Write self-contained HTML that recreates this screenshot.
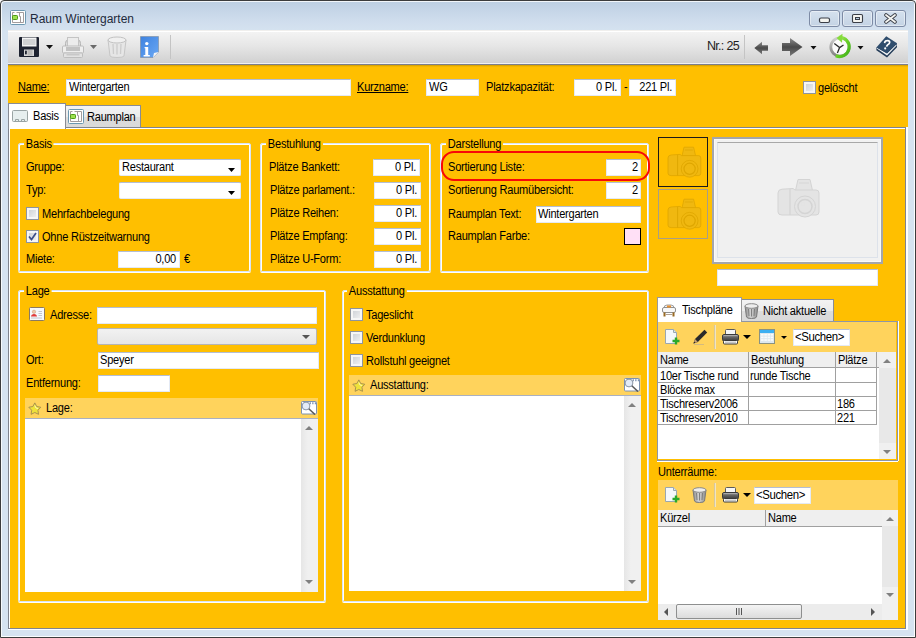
<!DOCTYPE html>
<html><head><meta charset="utf-8">
<style>
*{box-sizing:border-box}
html,body{margin:0;padding:0}
body{width:916px;height:638px;overflow:hidden;position:relative;font-family:"Liberation Sans",sans-serif;font-size:11px;color:#000;background:#ffffff}
.a{position:absolute}
.t{position:absolute;font-size:12px;line-height:13px;letter-spacing:-0.25px;white-space:nowrap;transform:scaleX(0.92);transform-origin:0 0}
.t[style*="text-align:right"]{transform-origin:100% 0}
.in{position:absolute;background:#fff;border:1px solid #e4eaf5;border-top-color:#b3bed5;border-radius:1px}
.cb{position:absolute;width:13px;height:13px;border:1px solid #8e949e;background:linear-gradient(135deg,#c8ccd2,#f6f6f6);box-shadow:inset 0 0 0 2px #f6f6f6}
.gb{position:absolute;border:1px solid #d9e4f4;border-radius:2px;box-shadow:inset 1px 1px 0 #fff,inset -1px 0 0 #fff,0 1px 0 #fff}
.gbt{position:absolute;background:#ffbf00;padding:0 2px;font-size:12px;line-height:13px;letter-spacing:-0.25px;white-space:nowrap;transform:scaleX(0.92);transform-origin:0 0}
.band{position:absolute;background:#ffd35c}
.ta{position:absolute;background:#fff}
.vs{position:absolute;background:linear-gradient(90deg,#e6e6e6,#f0f0f0 40%,#f0f0f0);width:17px}
.ut{text-decoration:underline}
.wb{width:31px;height:17px;border:1px solid #7d8ba5;border-radius:3px;background:linear-gradient(#d5e1ee,#c4d3e4);box-shadow:inset 0 0 0 1px rgba(255,255,255,0.45)}
</style></head><body>
<!-- window frame -->
<div class="a" style="left:0;top:0;width:916px;height:638px;border:1px solid #3c3c3c;border-radius:4px 4px 0 0;background:linear-gradient(#bdcfe2 0px,#cfdded 20px,#d6e3f0 31px,#d6e3f0 100%);box-shadow:inset 1px 1px 0 rgba(255,255,255,0.8),inset -1px -1px 0 rgba(255,255,255,0.9)"></div>
<!-- title -->
<svg class="a" style="left:10px;top:10px" width="16" height="15" viewBox="0 0 16 15">
<rect x="0.5" y="0.5" width="15" height="14" rx="1" fill="#fff" stroke="#6d98b0"/>
<path d="M2.5 12.5V2.5H4.5M6.5 2.5H13.5V12.5H2.5M9.5 2.5V6.5H10.5V12.5" fill="none" stroke="#a39c9c"/>
<rect x="2.5" y="5.5" width="5" height="4" rx="0.8" fill="#9ee050" stroke="#4c9c12"/>
</svg>
<div class="t" style="left:30px;top:12px;font-size:12px;line-height:14px;color:#1e2a3c;transform:none;letter-spacing:0">Raum Wintergarten</div>
<!-- title buttons -->
<div class="a wb" style="left:809px;top:10px"></div>
<div class="a wb" style="left:842px;top:10px"></div>
<div class="a wb" style="left:875px;top:10px"></div>
<svg class="a" style="left:818px;top:17px" width="13" height="7" viewBox="0 0 13 7"><rect x="1.5" y="1" width="10" height="4.5" rx="1.5" fill="#f4f4f0" stroke="#3b3f48" stroke-width="1.2"/></svg>
<svg class="a" style="left:851px;top:13px" width="13" height="11" viewBox="0 0 13 11"><rect x="1.5" y="1.5" width="10" height="8" rx="1.2" fill="#f4f4f0" stroke="#3b3f48" stroke-width="1.1"/><rect x="4.5" y="4.5" width="4" height="2" fill="#b8cce0" stroke="#3b3f48" stroke-width="1"/></svg>
<svg class="a" style="left:884px;top:13px" width="13" height="11" viewBox="0 0 13 11"><path d="M2 2L11 9M11 2L2 9" stroke="#3b3f48" stroke-width="3.6" stroke-linecap="round"/><path d="M2 2L11 9M11 2L2 9" stroke="#f4f4f0" stroke-width="1.8" stroke-linecap="round"/></svg>
<!-- toolbar -->
<div class="a" style="left:8px;top:30px;width:900px;height:34px;background:linear-gradient(#f0efed 0px,#f0efed 1px,#ffffff 1px,#ffffff 2px,#f3f3f3 2px,#e6e6e6 16px,#d2d2d2 32px,#cfcfcf 33px,#f0f0f0 33px)"></div>
<div class="a" style="left:170px;top:35px;width:1px;height:24px;background:#c4c4c4"></div>
<div class="a" style="left:744px;top:35px;width:1px;height:24px;background:#c4c4c4"></div>
<div class="t" style="left:707px;top:39px;font-size:12.5px;line-height:14px;color:#1e1e1e;letter-spacing:-0.7px;transform:none">Nr.: 25</div>
<!-- save -->
<svg class="a" style="left:19px;top:37px" width="20" height="20" viewBox="0 0 20 20">
<rect x="0" y="0" width="20" height="20" rx="1" fill="#1d2230"/>
<rect x="3" y="0.5" width="14.5" height="9" fill="#f4f4f4"/>
<rect x="4" y="2" width="12.5" height="6" fill="#d0d2d4"/>
<rect x="5" y="12.5" width="10" height="6.5" fill="#d6d6d6"/>
<rect x="8.5" y="13" width="5" height="5.5" fill="#b8b8b8"/>
<rect x="6" y="13.5" width="1.8" height="4" rx="0.8" fill="#1d2230"/>
</svg>
<svg class="a" style="left:46px;top:45px" width="7" height="4" viewBox="0 0 7 4"><path d="M0 0H7L3.5 4Z" fill="#111"/></svg>
<!-- printer disabled -->
<svg class="a" style="left:62px;top:37px" width="22" height="21" viewBox="0 0 22 21">
<path d="M3.5 12V6.5Q3.5 3 6 3H16Q18.5 3 18.5 6.5V12" fill="#dcdcdc" stroke="#b4b4b4"/>
<rect x="5.5" y="0.5" width="11" height="9" fill="#ececec" stroke="#c4c4c4"/>
<rect x="0.5" y="9" width="21" height="7" rx="1" fill="#eeeeee" stroke="#bdbdbd"/>
<rect x="4" y="10" width="14" height="4" fill="#c2c2c2"/>
<rect x="1.5" y="16" width="19" height="4.5" rx="1" fill="#e2e2e2" stroke="#bdbdbd"/>
<rect x="4.5" y="17" width="13" height="1.5" fill="#c8c8c8"/>
</svg>
<svg class="a" style="left:90px;top:45px" width="7" height="4" viewBox="0 0 7 4"><path d="M0 0H7L3.5 4Z" fill="#6a6a6a"/></svg>
<!-- trash disabled -->
<svg class="a" style="left:107px;top:36px" width="20" height="22" viewBox="0 0 20 22">
<path d="M1 4L3 20Q3.5 21.5 10 21.5Q16.5 21.5 17 20L19 4Z" fill="#e6e6e6" stroke="#c6c6c6"/>
<ellipse cx="10" cy="4" rx="9" ry="3" fill="#f0f0f0" stroke="#c2c2c2"/>
<path d="M6 8L6.5 18M10 8V18.5M14 8L13.5 18" stroke="#cccccc" stroke-width="1.3"/>
</svg>
<!-- info -->
<svg class="a" style="left:140px;top:36px" width="19" height="22" viewBox="0 0 19 22">
<defs><linearGradient id="ig" x1="0" y1="0" x2="1" y2="1"><stop offset="0" stop-color="#3e82df"/><stop offset="1" stop-color="#6aa8f4"/></linearGradient></defs>
<path d="M0.5 0.5H18.5V16L13 21.5H0.5Z" fill="url(#ig)" stroke="#7d8c9c" stroke-width="0.6"/>
<path d="M18.5 16L13 21.5L14 17Z" fill="#f4f4f4"/>
<circle cx="6.8" cy="7.6" r="1.7" fill="#fff"/>
<path d="M4.6 11H8.2V19H9.8V20.4H3.6V19H5.3V12.3H4.6Z" fill="#fff"/>
</svg>
<!-- left arrow -->
<svg class="a" style="left:754px;top:41px" width="15" height="14" viewBox="0 0 15 14">
<defs><linearGradient id="ag" x1="0" y1="0" x2="0" y2="1"><stop offset="0" stop-color="#8a8a8a"/><stop offset="0.5" stop-color="#4a4a4a"/><stop offset="1" stop-color="#777"/></linearGradient></defs>
<path d="M0.3 7L8 0.8V4.2H14V9.8H8V13.2Z" fill="url(#ag)"/>
</svg>
<!-- right arrow -->
<svg class="a" style="left:781px;top:37px" width="22" height="20" viewBox="0 0 22 20">
<path d="M1 6H9V1L21.5 10L9 19V14H1Z" fill="url(#ag)"/>
</svg>
<svg class="a" style="left:810px;top:46px" width="7" height="4" viewBox="0 0 7 4"><path d="M0.5 0H6.5L3.5 3.5Z" fill="#111"/></svg>
<!-- clock -->
<svg class="a" style="left:826px;top:32px" width="30" height="28" viewBox="0 0 30 28">
<defs><linearGradient id="cg" x1="0" y1="0" x2="1" y2="1"><stop offset="0" stop-color="#b8f070"/><stop offset="0.5" stop-color="#6cd228"/><stop offset="1" stop-color="#3cae18"/></linearGradient>
<linearGradient id="rg" x1="0" y1="0" x2="0" y2="1"><stop offset="0" stop-color="#d0d0d0"/><stop offset="1" stop-color="#808080"/></linearGradient></defs>
<circle cx="14" cy="15" r="9.2" fill="#fbfbfb" stroke="url(#rg)" stroke-width="2.8"/>
<path d="M13 5.3A9.6 9.6 0 1 1 9.8 23.7" fill="none" stroke="url(#cg)" stroke-width="3.2"/>
<path d="M10.5 6L16.5 1.8L16 10.8Z" fill="#86dc3c"/>
<path d="M13.6 15.6L8.3 11.4M13.6 15.6L17.5 13M13.6 15.6L11.4 21" stroke="#2a2a2a" stroke-width="1.3"/>
</svg>
<svg class="a" style="left:857px;top:46px" width="7" height="4" viewBox="0 0 7 4"><path d="M0.5 0H6.5L3.5 3.5Z" fill="#111"/></svg>
<!-- help book -->
<svg class="a" style="left:872px;top:32px" width="30" height="28" viewBox="0 0 30 28">
<path d="M4.4 15.4V18.2L15 25.6L25 15.2V11.2Z" fill="#243c58"/>
<path d="M4.8 16.6L15 23.4L24.6 13.4V12.2L15 21.6L4.8 15.4Z" fill="#f2f4f6"/>
<path d="M14.2 4.2L25 11.2L15 21.2L4.4 15.4Z" fill="#2f4d6d"/>
<path d="M12.6 11.2Q13 8.2 16 8.6Q18.6 9.2 17.2 11.6Q15.2 13 14.4 14.6" fill="none" stroke="#fff" stroke-width="1.7"/>
<circle cx="13.2" cy="16.4" r="1.05" fill="#fff"/>
</svg>

<!-- orange main -->
<div class="a" style="left:8px;top:64px;width:900px;height:64px;background:linear-gradient(#7c7f8a 0px,#7c7f8a 1px,#d09a00 1px,#e6ae00 2px,#ffbf00 3px)"></div>
<!-- header row -->
<div class="t ut" style="left:18px;top:81px">Name:</div>
<div class="in" style="left:66px;top:79px;width:285px;height:17px"></div>
<div class="t" style="left:69px;top:81px">Wintergarten</div>
<div class="t ut" style="left:357px;top:81px">Kurzname:</div>
<div class="in" style="left:426px;top:79px;width:53px;height:17px"></div>
<div class="t" style="left:429px;top:81px">WG</div>
<div class="t" style="left:486px;top:81px">Platzkapazität:</div>
<div class="in" style="left:574px;top:79px;width:47px;height:17px"></div>
<div class="t" style="left:574px;top:81px;width:43px;text-align:right">0 Pl.</div>
<div class="t" style="left:624px;top:81px">-</div>
<div class="in" style="left:629px;top:79px;width:47px;height:17px"></div>
<div class="t" style="left:629px;top:81px;width:43px;text-align:right">221 Pl.</div>
<div class="cb" style="left:803px;top:81px"></div>
<div class="t" style="left:818px;top:82px">gelöscht</div>
<!-- tab panel -->
<div class="a" style="left:8px;top:127px;width:900px;height:503px;background:#fff"></div>
<div class="a" style="left:8px;top:127px;width:898px;height:502px;border:1px solid #80848f;background:#ffbf00;box-shadow:inset 1px 1px 0 #fff"></div>
<!-- tabs -->
<div class="a" style="left:65px;top:105px;width:76px;height:22px;border:1px solid #898c95;border-bottom:none;background:linear-gradient(#f3f3f3 0%,#ebebeb 50%,#dddddd 50%,#d9d9d9 100%)"></div>
<svg class="a" style="left:68px;top:109px" width="16" height="15" viewBox="0 0 16 15">
<rect x="0.5" y="0.5" width="15" height="14" rx="1" fill="#fff" stroke="#6d98b0"/>
<path d="M2.5 12.5V2.5H4.5M6.5 2.5H13.5V12.5H2.5M9.5 2.5V6.5H10.5V12.5" fill="none" stroke="#a39c9c"/>
<rect x="2.5" y="5.5" width="5" height="4" rx="0.8" fill="#9ee050" stroke="#4c9c12"/>
</svg>
<div class="t" style="left:87px;top:111px">Raumplan</div>
<div class="a" style="left:8px;top:103px;width:58px;height:26px;border:1px solid #898c95;border-bottom:none;background:#fff"></div>
<svg class="a" style="left:12px;top:110px" width="16" height="12" viewBox="0 0 16 12">
<rect x="0.5" y="0.5" width="15" height="11" rx="1" fill="#e6eeee" stroke="#9aa4a4"/>
<path d="M3.5 11.5V9.5H6.5V11.5M9.5 11.5V9.5H12.5V11.5" fill="none" stroke="#9aa4a4"/>
</svg>
<div class="t" style="left:33px;top:110px">Basis</div>

<!-- Basis group -->
<div class="gb" style="left:18px;top:143px;width:233px;height:129px"></div>
<div class="gbt" style="left:24px;top:138px">Basis</div>
<div class="t" style="left:26px;top:161px">Gruppe:</div>
<div class="in" style="left:119px;top:159px;width:122px;height:17px;border-radius:2px"></div>
<div class="t" style="left:122px;top:161px">Restaurant</div>
<svg class="a dd" style="left:228px;top:168px" width="7" height="4"><path d="M0 0H7L3.5 4Z" fill="#000"/></svg>
<div class="t" style="left:26px;top:184px">Typ:</div>
<div class="in" style="left:119px;top:182px;width:122px;height:17px;border-radius:2px"></div>
<svg class="a dd" style="left:228px;top:191px" width="7" height="4"><path d="M0 0H7L3.5 4Z" fill="#000"/></svg>
<div class="cb" style="left:26px;top:207px"></div>
<div class="t" style="left:42px;top:208px">Mehrfachbelegung</div>
<div class="cb" style="left:26px;top:230px"></div>
<svg class="a" style="left:28px;top:232px" width="9" height="9" viewBox="0 0 9 9"><path d="M1 4.5L3.5 7.5L8 1" fill="none" stroke="#3d4f8a" stroke-width="1.7"/></svg>
<div class="t" style="left:42px;top:231px">Ohne Rüstzeitwarnung</div>
<div class="t" style="left:26px;top:253px">Miete:</div>
<div class="in" style="left:118px;top:251px;width:62px;height:17px"></div>
<div class="t" style="left:118px;top:253px;width:58px;text-align:right">0,00</div>
<div class="t" style="left:184px;top:253px">€</div>

<!-- Bestuhlung group -->
<div class="gb" style="left:260px;top:143px;width:171px;height:129px"></div>
<div class="gbt" style="left:266px;top:138px">Bestuhlung</div>
<div class="t" style="left:269px;top:161px">Plätze Bankett:</div>
<div class="in" style="left:373px;top:159px;width:47px;height:17px"></div>
<div class="t" style="left:373px;top:161px;width:43px;text-align:right">0 Pl.</div>
<div class="t" style="left:270px;top:184px">Plätze parlament.:</div>
<div class="in" style="left:374px;top:182px;width:47px;height:17px"></div>
<div class="t" style="left:374px;top:184px;width:43px;text-align:right">0 Pl.</div>
<div class="t" style="left:270px;top:207px">Plätze Reihen:</div>
<div class="in" style="left:374px;top:205px;width:47px;height:17px"></div>
<div class="t" style="left:374px;top:207px;width:43px;text-align:right">0 Pl.</div>
<div class="t" style="left:270px;top:230px">Plätze Empfang:</div>
<div class="in" style="left:374px;top:228px;width:47px;height:17px"></div>
<div class="t" style="left:374px;top:230px;width:43px;text-align:right">0 Pl.</div>
<div class="t" style="left:270px;top:253px">Plätze U-Form:</div>
<div class="in" style="left:374px;top:251px;width:47px;height:17px"></div>
<div class="t" style="left:374px;top:253px;width:43px;text-align:right">0 Pl.</div>

<!-- Darstellung group -->
<div class="gb" style="left:440px;top:143px;width:209px;height:129px"></div>
<div class="gbt" style="left:446px;top:138px">Darstellung</div>
<div class="t" style="left:448px;top:161px">Sortierung Liste:</div>
<div class="in" style="left:606px;top:159px;width:35px;height:17px"></div>
<div class="t" style="left:606px;top:161px;width:32px;text-align:right">2</div>
<div class="t" style="left:448px;top:184px">Sortierung Raumübersicht:</div>
<div class="in" style="left:606px;top:182px;width:35px;height:17px"></div>
<div class="t" style="left:606px;top:184px;width:32px;text-align:right">2</div>
<div class="t" style="left:448px;top:208px">Raumplan Text:</div>
<div class="in" style="left:536px;top:206px;width:105px;height:17px"></div>
<div class="t" style="left:538px;top:208px">Wintergarten</div>
<div class="t" style="left:448px;top:230px">Raumplan Farbe:</div>
<div class="a" style="left:624px;top:228px;width:17px;height:17px;border:1px solid #000;background:#ffe0f6"></div>
<div class="a" style="left:441px;top:151px;width:209px;height:30px;border:2px solid #f80808;border-radius:13px"></div>

<!-- image boxes -->
<div class="a" style="left:658px;top:137px;width:50px;height:50px;border:1px solid #1a1a1a"></div>
<svg class="a" style="left:666px;top:146px" width="36" height="32" viewBox="0 0 44 40"><use href="#cam" fill="#f0b810" stroke="#dea600"/></svg>
<div class="a" style="left:658px;top:189px;width:50px;height:50px;border:1px solid #a89e86"></div>
<svg class="a" style="left:666px;top:198px" width="36" height="32" viewBox="0 0 44 40"><use href="#cam" fill="#f0b810" stroke="#dea600"/></svg>
<div class="a" style="left:712px;top:137px;width:171px;height:127px;border:2px solid #a4a6ac;background:#f2f2f2;box-shadow:inset 1px 1px 0 #fafafa,inset -1px -1px 0 #fafafa"></div>
<div class="a" style="left:717px;top:142px;width:161px;height:116px;border:1px solid #dde2ea;border-top-color:#a8a8a8;background:#f0f0f0"></div>
<svg class="a" style="left:776px;top:178px" width="44" height="40" viewBox="0 0 44 40"><use href="#cam" fill="#e4e4e4" stroke="#d4d4d4"/></svg>
<div class="in" style="left:717px;top:269px;width:161px;height:17px"></div>

<svg width="0" height="0" style="position:absolute"><defs>
<g id="cam">
<path d="M22 1.5H34L36.5 12.5H19.5Z"/>
<path d="M2 15Q2 11.5 6 11.2L17 10.5L19 12H40Q43 12 43 15V34Q43 37 40 37H6Q2 37 2 34Z"/>
<path d="M14 11V37" fill="none" stroke-width="1.2"/>
<circle cx="29" cy="28.5" r="10.5"/>
<circle cx="29" cy="28.5" r="7" stroke-width="1.5"/>
<circle cx="27" cy="26" r="2" stroke="none" fill-opacity="0.5"/>
<path d="M23 5H33" fill="none" stroke-width="1.5" stroke-opacity="0.6"/>
</g>
<g id="star"><path d="M6.80 0.90L8.74 4.53L12.79 5.25L9.94 8.22L10.50 12.30L6.80 10.50L3.10 12.30L3.66 8.22L0.81 5.25L4.86 4.53Z" fill="#efe23a" stroke="#a08a50" stroke-width="0.9" stroke-linejoin="round"/><path d="M6.8 3.5L8 6L10 6.5" fill="none" stroke="#fffbc0" stroke-width="0.9"/></g>
<g id="srch"><rect x="0.5" y="0.5" width="15" height="12.5" rx="1" fill="#fff" stroke="#7d92b0"/><path d="M6 2.2H15" stroke="#7d92b0" stroke-width="2" stroke-dasharray="1.3 1.3"/><circle cx="5" cy="5" r="3.9" fill="#e4ecf8" stroke="#8a96a6" stroke-width="1"/><path d="M7.8 7.8L14 13.6" stroke="#5a5a5a" stroke-width="1.5"/></g>
<g id="up"><path d="M0 4L4 0L8 4Z"/></g>
<g id="dn"><path d="M0 0H8L4 4Z"/></g>
<g id="newdoc"><path d="M0.5 0.5H8.5L11.5 3.5V14.5H0.5Z" fill="#f4f8fa" stroke="#9aa8b0"/><path d="M8.5 0.5V3.5H11.5" fill="#dde6ea" stroke="#9aa8b0"/><path d="M11 8.5V15.5M7.5 12H14.5" stroke="#2aa82a" stroke-width="2.4"/></g>
<g id="prn"><rect x="3.5" y="0.5" width="10" height="6.5" rx="1" fill="#f6f6f6" stroke="#5a5a5a"/><rect x="0.5" y="5.5" width="16" height="6.5" rx="1.5" fill="url(#prg)" stroke="#3a3a3a"/><rect x="1.5" y="11.5" width="14" height="3.5" rx="1" fill="#fafafa" stroke="#3a3a3a"/><path d="M3 13.2H14" stroke="#b0b0b0"/></g><linearGradient id="prg" x1="0" y1="0" x2="0" y2="1"><stop offset="0" stop-color="#d8d8d8"/><stop offset="0.35" stop-color="#6a6a6a"/><stop offset="1" stop-color="#3a3a3a"/></linearGradient>
<g id="trash"><path d="M1 3L2.5 14Q3 15.5 7.5 15.5Q12 15.5 12.5 14L14 3Z" fill="url(#trg)" stroke="#7a7a7a"/><ellipse cx="7.5" cy="3" rx="6.5" ry="2.3" fill="#eeeeee" stroke="#8a8a8a"/><path d="M4.5 6L5 13M7.5 6V13.5M10.5 6L10 13" stroke="#777" stroke-width="0.9"/></g><linearGradient id="trg" x1="0" y1="0" x2="1" y2="0"><stop offset="0" stop-color="#8c8c8c"/><stop offset="0.45" stop-color="#d4d4d4"/><stop offset="1" stop-color="#8a8a8a"/></linearGradient>
</defs></svg>

<!-- Lage group -->
<div class="gb" style="left:18px;top:290px;width:308px;height:312px"></div>
<div class="gbt" style="left:24px;top:285px">Lage</div>
<svg class="a" style="left:29px;top:307px" width="16" height="14" viewBox="0 0 16 14"><rect x="0.5" y="0.5" width="15" height="13" rx="1" fill="#f6f9fc" stroke="#8a7a62"/><circle cx="5" cy="4.8" r="1.7" fill="#eec8a8" stroke="#c89878" stroke-width="0.5"/><path d="M2 9.6Q2.3 7 5 7Q7.7 7 8 9.6Z" fill="#e03a3a"/><path d="M9.5 4.5H13M9.5 6.5H13M9.5 8.5H13M2 11H13" stroke="#b8b8c0" stroke-width="0.8"/></svg>
<div class="t" style="left:50px;top:309px">Adresse:</div>
<div class="in" style="left:97px;top:307px;width:220px;height:17px"></div>
<div class="a" style="left:97px;top:328px;width:220px;height:17px;border:1px solid #b5b5b5;border-radius:2px;background:linear-gradient(#f2f2f2,#e6e6e6)"></div>
<svg class="a" style="left:302px;top:335px" width="8" height="4"><use href="#dn" fill="#555"/></svg>
<div class="t" style="left:26px;top:354px">Ort:</div>
<div class="in" style="left:98px;top:352px;width:221px;height:17px"></div>
<div class="t" style="left:100px;top:354px">Speyer</div>
<div class="t" style="left:26px;top:377px">Entfernung:</div>
<div class="in" style="left:98px;top:375px;width:72px;height:17px"></div>
<div class="band" style="left:25px;top:398px;width:293px;height:21px;border-bottom:1px solid #a9b0c2"></div>
<svg class="a" style="left:28px;top:402px" width="14" height="13"><use href="#star"/></svg>
<div class="t" style="left:46px;top:402px">Lage:</div>
<svg class="a" style="left:301px;top:401px" width="16" height="14"><use href="#srch"/></svg>
<div class="ta" style="left:25px;top:419px;width:293px;height:173px"></div>
<div class="vs" style="left:301px;top:419px;height:173px"></div>
<svg class="a" style="left:305px;top:426px" width="8" height="4"><use href="#up" fill="#808080"/></svg>
<svg class="a" style="left:305px;top:580px" width="8" height="4"><use href="#dn" fill="#808080"/></svg>

<!-- Ausstattung group -->
<div class="gb" style="left:342px;top:290px;width:307px;height:312px"></div>
<div class="gbt" style="left:347px;top:285px">Ausstattung</div>
<div class="cb" style="left:350px;top:308px"></div>
<div class="t" style="left:366px;top:309px">Tageslicht</div>
<div class="cb" style="left:350px;top:331px"></div>
<div class="t" style="left:366px;top:332px">Verdunklung</div>
<div class="cb" style="left:350px;top:354px"></div>
<div class="t" style="left:366px;top:355px">Rollstuhl geeignet</div>
<div class="band" style="left:349px;top:375px;width:292px;height:21px;border-bottom:1px solid #a9b0c2"></div>
<svg class="a" style="left:352px;top:379px" width="14" height="13"><use href="#star"/></svg>
<div class="t" style="left:370px;top:379px">Ausstattung:</div>
<svg class="a" style="left:624px;top:378px" width="16" height="14"><use href="#srch"/></svg>
<div class="ta" style="left:349px;top:396px;width:292px;height:195px"></div>
<div class="vs" style="left:624px;top:396px;height:195px"></div>
<svg class="a" style="left:628px;top:403px" width="8" height="4"><use href="#up" fill="#808080"/></svg>
<svg class="a" style="left:628px;top:580px" width="8" height="4"><use href="#dn" fill="#808080"/></svg>

<!-- Tischplaene -->
<div class="a" style="left:741px;top:299px;width:93px;height:23px;border:1px solid #898c95;border-bottom:none;background:linear-gradient(#f3f3f3 0%,#ebebeb 50%,#dddddd 50%,#d9d9d9 100%)"></div>
<svg class="a" style="left:744px;top:303px" width="15" height="16"><use href="#trash"/></svg>
<div class="t" style="left:763px;top:305px">Nicht aktuelle</div>
<div class="a" style="left:657px;top:321px;width:241px;height:140px;border:1px solid #8e96a6;background:#ffbf00;box-shadow:0 1px 0 #fff,1px 0 0 #fff"></div>
<div class="ta" style="left:658px;top:352px;width:238px;height:107px"></div>
<div class="a" style="left:657px;top:297px;width:85px;height:25px;border:1px solid #9a9a9a;border-bottom:none;background:#fff"></div>
<svg class="a" style="left:662px;top:304px" width="14" height="13" viewBox="0 0 14 13"><path d="M2 4Q2 1 5 1H9Q12 1 12 4" fill="#f0f0f0" stroke="#a0a0a0"/><rect x="0.5" y="3.5" width="13" height="5" rx="1.5" fill="#f8f8f8" stroke="#909090"/><rect x="5" y="1.5" width="4" height="2" fill="#e89030"/><rect x="1.5" y="8.5" width="2" height="4" fill="#9a6a20"/><rect x="10.5" y="8.5" width="2" height="4" fill="#9a6a20"/><path d="M3.5 10.5H10.5" stroke="#b0a090"/></svg>
<div class="t" style="left:682px;top:304px">Tischpläne</div>
<div class="band" style="left:658px;top:322px;width:238px;height:30px"></div>
<svg class="a" style="left:665px;top:329px" width="15" height="16"><use href="#newdoc"/></svg>
<svg class="a" style="left:692px;top:329px" width="16" height="16" viewBox="0 0 16 16"><path d="M1.5 14.5L3 10L12.5 0.8L15.2 3.5L5.8 13Z" fill="#2a2a2a"/><path d="M1.5 14.5L3 10L5.8 13Z" fill="#c8a070"/><path d="M1.5 14.5L2.2 12.5L3.5 13.8Z" fill="#222"/><path d="M2 15.5H12" stroke="#c8b488" stroke-width="0.8"/></svg>
<div class="a" style="left:714px;top:325px;width:2px;height:24px;background:linear-gradient(90deg,#c8b890,#fff4d0)"></div>
<svg class="a" style="left:722px;top:329px" width="17" height="16"><use href="#prn"/></svg>
<svg class="a" style="left:743px;top:335px" width="8" height="4"><use href="#dn" fill="#000"/></svg>
<svg class="a" style="left:759px;top:329px" width="16" height="15" viewBox="0 0 16 15"><rect x="0.5" y="0.5" width="15" height="14" fill="#dde8ee" stroke="#8a9282"/><rect x="1" y="1" width="14" height="3" fill="#3cb0f2"/><g fill="#fafcfc"><rect x="2" y="5" width="2.6" height="1.6"/><rect x="5.3" y="5" width="2.6" height="1.6"/><rect x="8.6" y="5" width="2.6" height="1.6"/><rect x="11.9" y="5" width="2.2" height="1.6"/><rect x="2" y="7.6" width="2.6" height="1.6"/><rect x="5.3" y="7.6" width="2.6" height="1.6"/><rect x="8.6" y="7.6" width="2.6" height="1.6"/><rect x="11.9" y="7.6" width="2.2" height="1.6"/><rect x="2" y="10.2" width="2.6" height="1.6"/><rect x="5.3" y="10.2" width="2.6" height="1.6"/><rect x="8.6" y="10.2" width="2.6" height="1.6"/><rect x="11.9" y="10.2" width="2.2" height="1.6"/></g></svg>
<svg class="a" style="left:781px;top:336px" width="6" height="4"><path d="M0 0H6L3 3Z" fill="#000"/></svg>
<div class="in" style="left:793px;top:329px;width:57px;height:17px"></div>
<div class="t" style="left:795px;top:330px;font-size:12px;line-height:14px;letter-spacing:-0.4px;transform:scaleX(0.95)">&lt;Suchen&gt;</div>
<!-- grid -->
<div class="a" style="left:658px;top:352px;width:221px;height:16px;background:#efefef;border-bottom:1px solid #a0a0a0"></div>
<div class="a" style="left:748px;top:352px;width:1px;height:73px;background:#a0a0a0"></div>
<div class="a" style="left:835px;top:352px;width:1px;height:73px;background:#a0a0a0"></div>
<div class="a" style="left:876px;top:352px;width:1px;height:73px;background:#a0a0a0"></div>
<div class="a" style="left:658px;top:382px;width:219px;height:1px;background:#a0a0a0"></div>
<div class="a" style="left:658px;top:396px;width:219px;height:1px;background:#a0a0a0"></div>
<div class="a" style="left:658px;top:410px;width:219px;height:1px;background:#a0a0a0"></div>
<div class="a" style="left:658px;top:424px;width:219px;height:1px;background:#a0a0a0"></div>
<div class="t" style="left:660px;top:354px">Name</div>
<div class="t" style="left:751px;top:354px">Bestuhlung</div>
<div class="t" style="left:838px;top:354px">Plätze</div>
<div class="t" style="left:660px;top:370px">10er Tische rund</div>
<div class="t" style="left:750px;top:370px">runde Tische</div>
<div class="t" style="left:660px;top:384px">Blöcke max</div>
<div class="t" style="left:660px;top:398px">Tischreserv2006</div>
<div class="t" style="left:837px;top:398px">186</div>
<div class="t" style="left:660px;top:412px">Tischreserv2010</div>
<div class="t" style="left:837px;top:412px">221</div>
<div class="vs" style="left:879px;top:352px;height:107px;background:linear-gradient(#f0f0f0 0,#f0f0f0 16px,#e8e8e8 16px,#e8e8e8 91px,#f0f0f0 91px)"></div>
<svg class="a" style="left:883px;top:359px" width="8" height="4"><use href="#up" fill="#808080"/></svg>
<svg class="a" style="left:883px;top:450px" width="8" height="4"><use href="#dn" fill="#808080"/></svg>

<!-- Unterraeume -->
<div class="t" style="left:658px;top:466px">Unterräume:</div>
<div class="band" style="left:658px;top:480px;width:240px;height:30px"></div>
<svg class="a" style="left:665px;top:487px" width="15" height="16"><use href="#newdoc"/></svg>
<svg class="a" style="left:692px;top:487px" width="15" height="16"><use href="#trash"/></svg>
<div class="a" style="left:714px;top:483px;width:2px;height:24px;background:linear-gradient(90deg,#c8b890,#fff4d0)"></div>
<svg class="a" style="left:722px;top:487px" width="17" height="16"><use href="#prn"/></svg>
<svg class="a" style="left:743px;top:493px" width="8" height="4"><use href="#dn" fill="#000"/></svg>
<div class="in" style="left:754px;top:487px;width:57px;height:17px"></div>
<div class="t" style="left:756px;top:488px;font-size:12px;line-height:14px;letter-spacing:-0.4px;transform:scaleX(0.95)">&lt;Suchen&gt;</div>
<div class="ta" style="left:658px;top:510px;width:240px;height:110px"></div>
<div class="a" style="left:658px;top:510px;width:224px;height:17px;background:#efefef;border-bottom:1px solid #a0a0a0"></div>
<div class="a" style="left:765px;top:510px;width:1px;height:16px;background:#a0a0a0"></div>
<div class="t" style="left:660px;top:512px">Kürzel</div>
<div class="t" style="left:768px;top:512px">Name</div>
<div class="vs" style="left:882px;top:510px;height:94px;width:16px;background:linear-gradient(#f0f0f0 0,#f0f0f0 16px,#e8e8e8 16px,#e8e8e8 77px,#f0f0f0 77px)"></div>
<svg class="a" style="left:886px;top:517px" width="8" height="4"><use href="#up" fill="#808080"/></svg>
<svg class="a" style="left:886px;top:593px" width="8" height="4"><use href="#dn" fill="#808080"/></svg>
<div class="a" style="left:658px;top:604px;width:240px;height:16px;background:#ececec"></div>
<div class="a" style="left:882px;top:604px;width:16px;height:16px;background:#f0f0f0"></div>
<div class="a" style="left:676px;top:604px;width:126px;height:15px;border:1px solid #8e8f8f;border-radius:2px;background:linear-gradient(#f4f4f4,#dcdcdc)"></div>
<svg class="a" style="left:735px;top:608px" width="8" height="7" viewBox="0 0 8 7"><path d="M1.5 0V7M4 0V7M6.5 0V7" stroke="#555" stroke-width="1"/></svg>
<svg class="a" style="left:664px;top:608px" width="4" height="8"><path d="M4 0V8L0 4Z" fill="#555"/></svg>
<svg class="a" style="left:871px;top:608px" width="4" height="8"><path d="M0 0V8L4 4Z" fill="#555"/></svg>

</body></html>
